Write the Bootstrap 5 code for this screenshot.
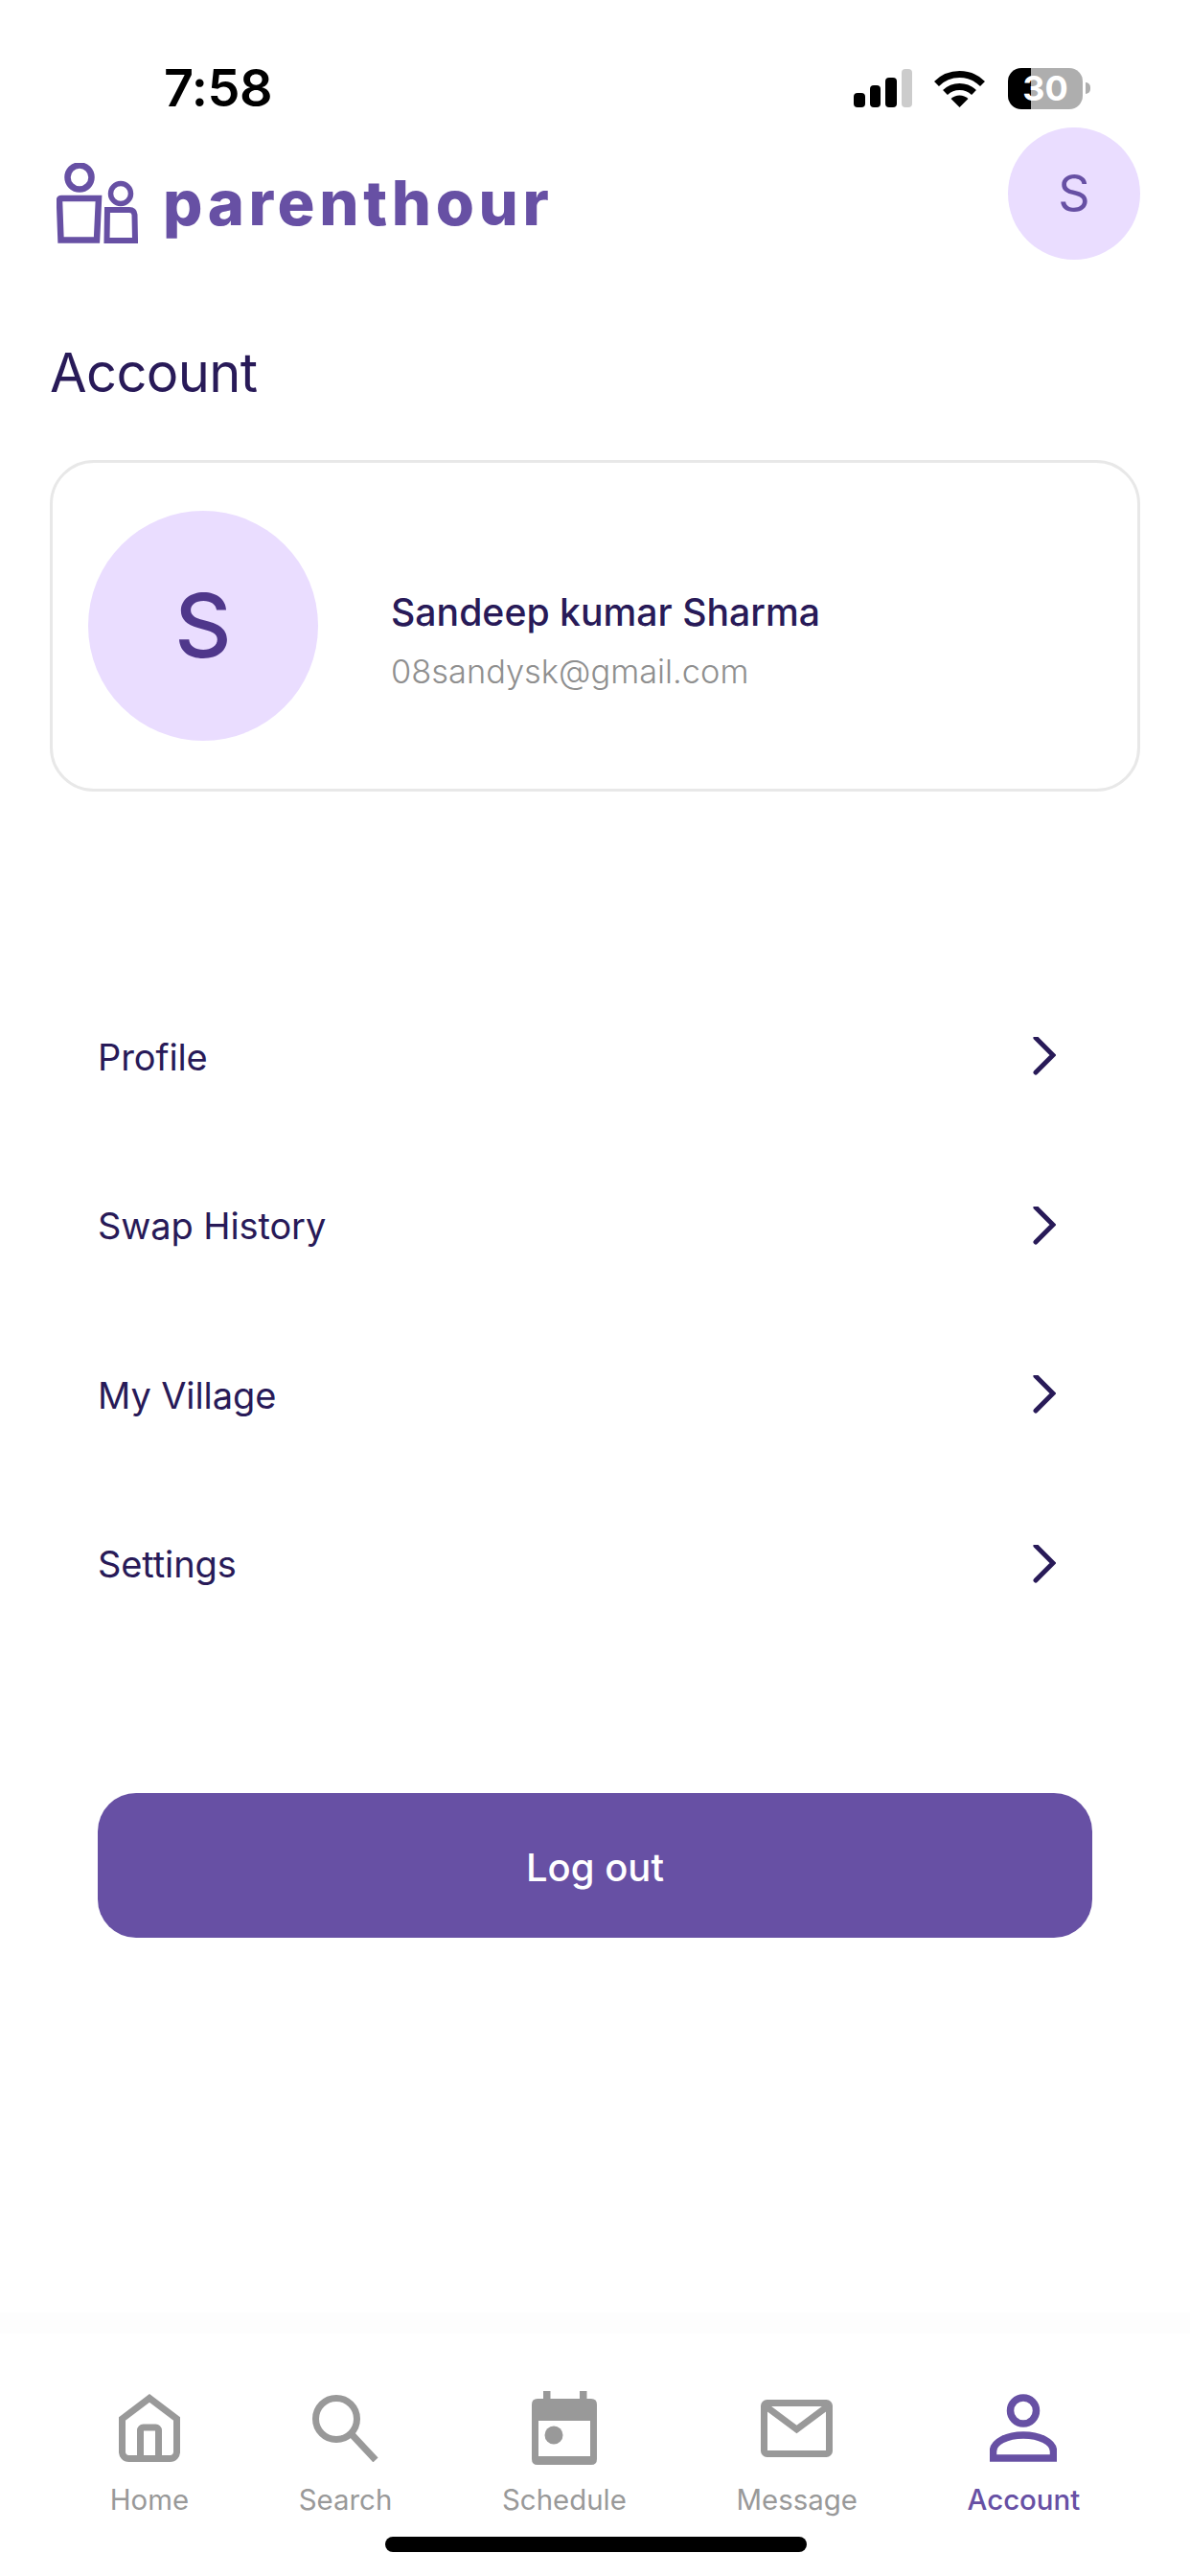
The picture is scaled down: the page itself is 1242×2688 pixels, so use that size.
<!DOCTYPE html>
<html lang="en"><head><meta charset="utf-8"><title>Account</title>
<link href="https://cdn.jsdelivr.net/npm/bootstrap@5.3.0/dist/css/bootstrap.min.css" rel="stylesheet">
<style>
html,body{margin:0;background:#fff}
body{font-family:Inter,"Liberation Sans",sans-serif;color:#281a58}
.phone{width:1242px;height:2688px;position:relative;overflow:hidden;background:#fff}
.status-row{height:133px;padding:70px 104px 0 171px}
.clock{font-size:54px;font-weight:600;color:#000;line-height:44px;letter-spacing:-.5px}
.sig-icons{gap:23px;height:44px}
.sig-bars{gap:5px;height:40px}
.sig-bars i{display:block;width:11.5px;border-radius:4px;background:#000}
.sig-bars i.off{background:#ccc}
.h-1a{height:15px}.h-2a{height:23px}.h-3a{height:31px}.h-4a{height:40px}
.batt{width:78px;height:43px;border-radius:14px;background:linear-gradient(90deg,#000 0 24px,#aeaeae 24px);color:#fff;font-size:36px;font-weight:700;line-height:43px}
.batt-wrap{gap:3px;margin-left:1px}
.batt-nub{width:5px;height:12px;border-radius:0 6px 6px 0;background:#aeaeae}
.top-head{height:138px;padding:0 52px 0 59px}
.brand{gap:26px;margin-top:20px}
.brand-text{font-size:65px;font-weight:800;color:#6750a4;letter-spacing:4.6px;line-height:70px}
.ava{background:#eaddff;color:#6750a4}
.ava-sm{width:138px;height:138px;font-size:52px}
.ava-lg{width:240px;height:240px;font-size:92px;font-weight:500;color:#4f378b}
.page-title{font-size:56px;font-weight:400;line-height:68px;margin:84px 0 57px 52px;letter-spacing:-.6px;color:#281a58}
.acct-card{width:1138px;height:346px;margin-left:52px;border:3px solid #e8e8e8;border-radius:46px;padding-left:37px;gap:76px;background:#fff}
.acct-text{padding-top:32px}
.acct-name{font-size:39.200px;font-weight:500;line-height:48px;color:#281a58}
.acct-mail{font-size:34.400px;font-weight:300;line-height:44px;color:#8f8f8f;margin-top:16px}
.menu-list{margin:189px 0 0 0}
.menu-row{height:176.5px;padding:0 140px 0 102px;font-size:38px;letter-spacing:-.1px;border:0;background:transparent;color:#281a58}
.logout{display:block;width:1038px;height:151px;margin:150px 0 0 102px;padding-top:10px;border:0;border-radius:40px;background:#6750a4;color:#fff;font-size:40px;font-weight:500}
.tabbar{position:absolute;left:0;right:0;bottom:0;height:275px;padding-top:60px;background:#fff;border-top:22px solid #fdfdfd}
.tab-item{font-size:29.400px;line-height:36px;color:#999;gap:19px}
.tab-item.on{color:#6750a4;font-weight:500}
.tab-icon{height:77px;flex-shrink:0}
.home-bar{position:absolute;left:402px;top:2647px;width:440px;height:16px;border-radius:8px;background:#000}
</style></head><body>
<div class="phone d-flex flex-column">
  <div class="status-row d-flex justify-content-between align-items-start">
    <div class="clock">7:58</div>
    <div class="sig-icons d-flex align-items-center">
      <div class="sig-bars d-flex align-items-end">
        <i class="h-1a"></i><i class="h-2a"></i><i class="h-3a"></i><i class="h-4a off"></i>
      </div>
      <svg width="53" height="40" viewBox="0 0 53 40" fill="none" stroke="#000" stroke-width="7"><path d="M2.5 15.5A34 34 0 0 1 50.5 15.5"/><path d="M11.5 24.5A21.5 21.5 0 0 1 41.5 24.5"/><path d="M26.5 40L17.5 31A13 13 0 0 1 35.5 31Z" fill="#000" stroke="none"/></svg>
      <div class="d-flex align-items-center batt-wrap">
        <div class="batt text-center">30</div><div class="batt-nub"></div>
      </div>
    </div>
  </div>

  <div class="top-head d-flex justify-content-between align-items-center">
    <div class="brand d-flex align-items-center">
      <svg width="85" height="84" viewBox="0 0 85 84" fill="none" stroke="#6750a4"><circle cx="24" cy="15" r="12.5" stroke-width="6.5"/><path d="M5 37H44L42 80.500H4.500L3 39.500Q3 37 5 37Z" stroke-width="6.500"/><circle cx="67" cy="32" r="10.500" stroke-width="5.500"/><path d="M53 49H76Q81 49 81.500 54L82 81H52.500Z" stroke-width="6"/></svg>
      <div class="brand-text">parenthour</div>
    </div>
    <div class="ava ava-sm rounded-circle d-flex align-items-center justify-content-center">S</div>
  </div>

  <h1 class="page-title">Account</h1>

  <div class="acct-card d-flex align-items-center">
    <div class="ava ava-lg rounded-circle d-flex align-items-center justify-content-center flex-shrink-0">S</div>
    <div class="acct-text">
      <div class="acct-name">Sandeep kumar Sharma</div>
      <div class="acct-mail">08sandysk@gmail.com</div>
    </div>
  </div>

  <div class="list-group list-group-flush menu-list">
    <a class="list-group-item menu-row d-flex justify-content-between align-items-center">Profile
      <svg width="24" height="42" viewBox="0 2 24 42" fill="none" stroke="#281a58" stroke-width="5" stroke-linecap="round"><path d="M3 3L21 21L3 39"/></svg></a>
    <a class="list-group-item menu-row d-flex justify-content-between align-items-center">Swap History
      <svg width="24" height="42" viewBox="0 2 24 42" fill="none" stroke="#281a58" stroke-width="5" stroke-linecap="round"><path d="M3 3L21 21L3 39"/></svg></a>
    <a class="list-group-item menu-row d-flex justify-content-between align-items-center">My Village
      <svg width="24" height="42" viewBox="0 2 24 42" fill="none" stroke="#281a58" stroke-width="5" stroke-linecap="round"><path d="M3 3L21 21L3 39"/></svg></a>
    <a class="list-group-item menu-row d-flex justify-content-between align-items-center">Settings
      <svg width="24" height="42" viewBox="0 2 24 42" fill="none" stroke="#281a58" stroke-width="5" stroke-linecap="round"><path d="M3 3L21 21L3 39"/></svg></a>
  </div>

  <button class="btn logout" type="button">Log out</button>

  <div class="tabbar d-flex justify-content-evenly align-items-start">
    <div class="tab-item d-flex flex-column align-items-center">
      <div class="tab-icon d-flex align-items-center"><svg width="64" height="71" viewBox="0 0 64 71" fill="none" stroke="#999" stroke-width="7"><path d="M3.500 26L32 4.500L60.500 26V60A7 7 0 0 1 53.500 67.500H10.500A7 7 0 0 1 3.500 60Z"/><path d="M22.500 67V38A3 3 0 0 1 25.500 35H38.500A3 3 0 0 1 41.500 38V67"/></svg></div>
      <div>Home</div>
    </div>
    <div class="tab-item d-flex flex-column align-items-center">
      <div class="tab-icon d-flex align-items-center"><svg width="69" height="70" viewBox="0 0 69 70" fill="none" stroke="#999" stroke-width="7"><circle cx="25" cy="25" r="21.500"/><path d="M40 40L66 68"/></svg></div>
      <div>Search</div>
    </div>
    <div class="tab-item d-flex flex-column align-items-center">
      <div class="tab-icon d-flex align-items-center"><svg width="68" height="77" viewBox="0 0 68 77"><path d="M12 0H19.500V8H50V0H57.500V8H62Q68 8 68 14V71Q68 77 62 77H6Q0 77 0 71V14Q0 8 6 8H12ZM7 31V68H61V31Z" fill="#999" fill-rule="evenodd"/><circle cx="23" cy="46" r="9.500" fill="#999"/></svg></div>
      <div>Schedule</div>
    </div>
    <div class="tab-item d-flex flex-column align-items-center">
      <div class="tab-icon d-flex align-items-center"><svg width="75" height="60" viewBox="0 0 75 60" fill="none" stroke="#999" stroke-width="7"><rect x="3.500" y="3.500" width="68" height="53" rx="3"/><path d="M4 6L37.500 31L71 6"/></svg></div>
      <div>Message</div>
    </div>
    <div class="tab-item on d-flex flex-column align-items-center">
      <div class="tab-icon d-flex align-items-center"><svg width="70" height="71" viewBox="0 0 70 71" fill="none" stroke="#6750a4" stroke-width="7.500"><circle cx="35" cy="17.500" r="13.500"/><path d="M3.500 67V60C3.500 50 18 43 35 43C52 43 66.500 50 66.500 60V67Z"/></svg></div>
      <div>Account</div>
    </div>
  </div>
  <div class="home-bar"></div>
</div>
<script src="https://cdn.jsdelivr.net/npm/bootstrap@5.3.0/dist/js/bootstrap.bundle.min.js"></script>
</body></html>
